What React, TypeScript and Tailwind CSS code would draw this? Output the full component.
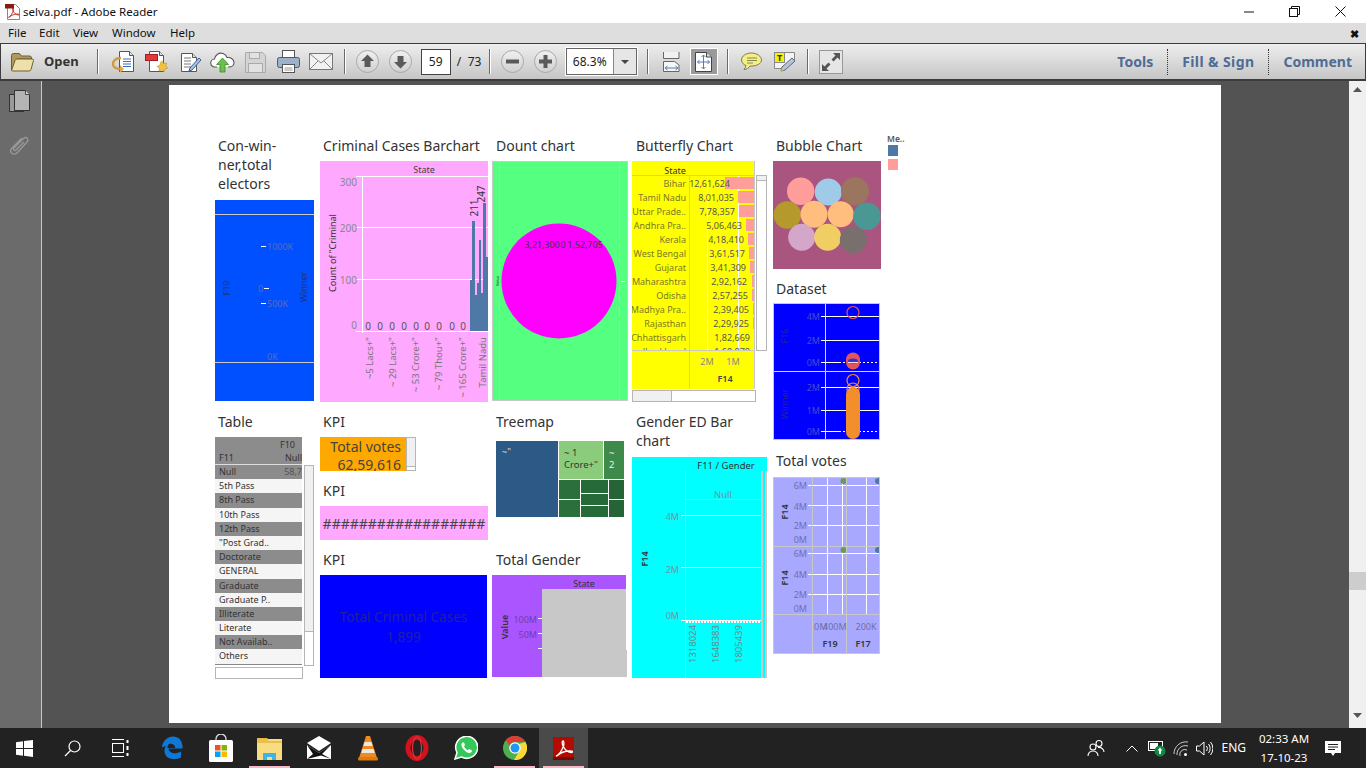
import React from "react";

type TP = { x: number; y: number; c?: string; s?: number; a?: "start" | "middle" | "end"; r?: boolean; w?: number; children: React.ReactNode };
const T = ({ x, y, c = "#555", s = 9, a = "middle", r, w, children }: TP) => (
  <text x={x} y={y} fill={c} fontSize={s} fontWeight={w} textAnchor={a} dominantBaseline="central" transform={r ? `rotate(-90 ${x} ${y})` : undefined}>
    {children}
  </text>
);
const L = ({ x1, y1, x2, y2, c = "#fff", w = 1, d }: { x1: number; y1: number; x2: number; y2: number; c?: string; w?: number; d?: string }) => (
  <line x1={x1} y1={y1} x2={x2} y2={y2} stroke={c} strokeWidth={w} strokeDasharray={d} />
);

const Title = ({ children, className = "" }: { children: React.ReactNode; className?: string }) => (
  <div className={"pl-[3px] text-[14px] leading-[19px] text-[#333] " + className}>{children}</div>
);

/* ---------- charts ---------- */
const ElectorsChart = () => (
  <svg width={99} height={201} className="block bg-[#0050ff]">
    <L x1={0} y1={14.5} x2={99} y2={14.5} c="#c8c8c8" />
    <L x1={0} y1={162.5} x2={99} y2={162.5} c="#c8c8c8" />
    <L x1={46} y1={46.5} x2={51} y2={46.5} />
    <L x1={49} y1={88.5} x2={54} y2={88.5} />
    <L x1={46} y1={103.5} x2={51} y2={103.5} />
    <T x={52} y={46} a="start" c="#5a6ab8">1000K</T>
    <T x={43} y={88} a="start" c="#5a6ab8">0</T>
    <T x={52} y={103} a="start" c="#5a6ab8">500K</T>
    <T x={52} y={156} a="start" c="#5a6ab8">0K</T>
    <T x={11} y={88} r c="#1d3580">F19</T>
    <T x={88} y={87} r c="#1d3580">Winner</T>
  </svg>
);

const zeros = [48, 60, 72, 84, 96, 107, 119, 132, 143];
const bars: [number, number, number][] = [[150, 2, 119], [152, 3, 60], [155, 2, 134], [157, 2, 122], [159, 2, 79], [161, 2, 132], [163, 3, 42], [166, 2, 96]];
const ticks: [number, string][] = [[49, '~5 Lacs+"'], [72, '~ 29 Lacs+"'], [95, '~ 53 Crore+"'], [118, '~ 79 Thou+"'], [142, '~ 165 Crore+"'], [162, "Tamil Nadu"]];
const CriminalChart = () => (
  <svg width={168} height={241} className="block bg-[#ffa8ff]">
    <T x={104} y={8} c="#444">State</T>
    <L x1={36} y1={15.5} x2={168} y2={15.5} />
    <L x1={36} y1={66.5} x2={168} y2={66.5} />
    <L x1={36} y1={118.5} x2={168} y2={118.5} />
    <L x1={36} y1={170.5} x2={168} y2={170.5} />
    <L x1={42.5} y1={15} x2={42.5} y2={172} />
    <T x={37} y={21} a="end" c="#888" s={10}>300</T>
    <T x={37} y={67} a="end" c="#888" s={10}>200</T>
    <T x={37} y={119} a="end" c="#888" s={10}>100</T>
    <T x={37} y={164} a="end" c="#888" s={10}>0</T>
    <T x={12} y={92} r c="#333" s={9}>Count of "Criminal</T>
    {zeros.map((x) => (
      <T key={x} x={x} y={165} c="#555" s={10}>0</T>
    ))}
    {bars.map(([x, w, t]) => (
      <rect key={x} x={x} y={t} width={w} height={170 - t} fill="#4e79a7" />
    ))}
    <T x={154} y={47} r c="#333" s={10}>211</T>
    <T x={161} y={33} r c="#333" s={10}>247</T>
    {ticks.map(([x, s]) => (
      <T key={x} x={x} y={176} a="end" r c="#777" s={9.5}>{s}</T>
    ))}
  </svg>
);

const DonutChart = () => (
  <svg width={136} height={240} className="block bg-[#55ff80] border border-[#c8c8c8]">
    <g transform="translate(-1 -1)">
      <L x1={7.5} y1={0} x2={7.5} y2={240} c="#c8c8c8" />
      <L x1={127.5} y1={0} x2={127.5} y2={240} c="#c8c8c8" />
      <circle cx={67} cy={120} r={57.5} fill="#ff00ff" />
      <T x={50} y={84} s={8.8} c="#333">3,21,300</T>
      <T x={71} y={84} s={8.8} c="#333">0</T>
      <T x={93} y={84} s={8.8} c="#333">1,52,705</T>
      <T x={5} y={120} r s={4} c="#222">Value</T>
      <L x1={129} y1={120.5} x2={133} y2={120.5} />
    </g>
  </svg>
);

const rows: [string, string, number, number][] = [
  ["Bihar", "12,61,624", 98, 93], ["Tamil Nadu", "8,01,035", 102, 106], ["Uttar Prade..", "7,78,357", 103, 107],
  ["Andhra Pra..", "5,06,463", 110, 114], ["Kerala", "4,18,410", 112, 116], ["West Bengal", "3,61,517", 113, 117],
  ["Gujarat", "3,41,309", 114, 118], ["Maharashtra", "2,92,162", 115, 120], ["Odisha", "2,57,255", 116, 120],
  ["Madhya Pra..", "2,39,405", 117, 121], ["Rajasthan", "2,29,925", 117, 121], ["Chhattisgarh", "1,82,669", 118, 122],
  ["Jharkhand", "1,68,878", 118, 122],
];
const ButterflyChart = () => (
  <svg width={123} height={228} className="block bg-[#ffff00]">
    <T x={43} y={9} c="#333" s={9}>State</T>
    <L x1={0} y1={14.5} x2={123} y2={14.5} c="#c8c8c8" />
    <L x1={57.5} y1={14} x2={57.5} y2={228} c="#c8c8c8" />
    <svg y={15} width={123} height={174}>
      <L x1={75.5} y1={0} x2={75.5} y2={174} />
      <L x1={106.5} y1={0} x2={106.5} y2={174} />
      {rows.map(([n, v, e, b], i) => (
        <g key={n}>
          <rect x={b} y={i * 14 + 1} width={122 - b} height={12} fill="#ff9d9a" />
          <T x={54} y={i * 14 + 7} a="end" c="#7a7a2a" s={9}>{n}</T>
          <T x={e} y={i * 14 + 7} a="end" c="#555" s={9}>{v}</T>
        </g>
      ))}
    </svg>
    <L x1={0} y1={189.5} x2={123} y2={189.5} c="#c8c8c8" />
    <L x1={122.5} y1={0} x2={122.5} y2={228} c="#c8c8c8" />
    <T x={75} y={200} c="#888" s={9}>2M</T>
    <T x={101} y={200} c="#888" s={9}>1M</T>
    <T x={93} y={217} c="#444" s={9} w={600}>F14</T>
  </svg>
);

const circles: [number, number, number, string][] = [
  [27.7, 30.3, 13.7, "#ff9d9a"], [55.3, 31, 13.5, "#a0cbe8"], [82, 30.3, 14, "#9c755f"], [14.3, 54, 13.7, "#b6992d"],
  [41, 53.3, 13.5, "#ffbe7d"], [67.7, 53.3, 13, "#ffbe7d"], [94, 55.3, 13.7, "#499894"], [28.7, 76.3, 13.5, "#d4a6c8"],
  [54.7, 76.3, 13.5, "#f1ce63"], [80.3, 79, 13.5, "#79706e"],
];
const BubbleChart = () => (
  <svg width={108} height={108} className="block bg-[#aa5580]">
    {circles.map(([x, y, r, c]) => (
      <circle key={x} cx={x} cy={y} r={r} fill={c} />
    ))}
  </svg>
);

const DatasetChart = () => (
  <svg width={107} height={137} className="block bg-[#0000ff] border border-[#c8c8c8]">
    <g transform="translate(-1 -1)">
      <L x1={52.5} y1={0} x2={52.5} y2={138} c="#d8d8d8" />
      <L x1={0} y1={68.5} x2={108} y2={68.5} c="#d8d8d8" />
      {[13.5, 37.5, 84.5, 107.5].map((y) => (
        <L key={y} x1={48} y1={y} x2={108} y2={y} />
      ))}
      {[59.5, 128.5].map((y) => (
        <g key={y}>
          <L x1={48} y1={y} x2={66} y2={y} />
          <L x1={66} y1={y} x2={108} y2={y} d="2 2" />
        </g>
      ))}
      {([[13, "4M"], [37, "2M"], [59, "0M"], [84, "2M"], [107, "1M"], [128, "0M"]] as [number, string][]).map(([y, s]) => (
        <T key={y} x={47} y={y} a="end" c="#4a4ad0" s={9}>{s}</T>
      ))}
      <T x={11} y={33} r c="#22229a" s={9}>F16</T>
      <T x={11} y={101} r c="#22229a" s={9}>Winner</T>
      <circle cx={80} cy={9.5} r={6} fill="none" stroke="#e15759" strokeWidth={1.2} />
      <rect x={73} y={49.5} width={14} height={17} rx={7} fill="#e15759" />
      <ellipse cx={80} cy={58} rx={5} ry={2.5} fill="#3030e0" />
      <L x1={75} y1={59.5} x2={85} y2={59.5} c="#ffd8d8" />
      <circle cx={80} cy={77.5} r={6} fill="none" stroke="#f28e2b" strokeWidth={1.2} />
      <circle cx={80} cy={86} r={6} fill="none" stroke="#f28e2b" strokeWidth={1.2} />
      <rect x={73} y={84} width={14} height={52} rx={7} fill="#f28e2b" />
    </g>
  </svg>
);

const VotesChart = () => (
  <svg width={107} height={177} className="block bg-[#a8a8ff] border border-[#c8c8c8]">
    <g transform="translate(-1 -1)">
      {[54, 69, 93].map((x) => (
        <L key={x} x1={x + 0.5} y1={0} x2={x + 0.5} y2={137} />
      ))}
      {[8.5, 28.5, 48.5, 76.5, 97.5, 117.5].map((y) => (
        <L key={y} x1={35} y1={y} x2={108} y2={y} />
      ))}
      <L x1={39.5} y1={0} x2={39.5} y2={178} c="#c8c8c8" />
      <L x1={73.5} y1={0} x2={73.5} y2={178} c="#c8c8c8" />
      <L x1={0} y1={69.5} x2={108} y2={69.5} c="#c8c8c8" />
      <L x1={0} y1={137.5} x2={108} y2={137.5} c="#c8c8c8" />
      {([[8, "6M"], [29, "4M"], [48, "2M"], [62, "0M"], [76, "6M"], [97, "4M"], [117, "2M"], [131, "0M"]] as [number, string][]).map(([y, s]) => (
        <T key={y} x={34} y={y} a="end" c="#7070a8" s={9}>{s}</T>
      ))}
      <T x={11} y={35} r c="#333" s={9} w={600}>F14</T>
      <T x={11} y={101} r c="#333" s={9} w={600}>F14</T>
      <circle cx={70.5} cy={4} r={3} fill="#6a9a5a" />
      <circle cx={105} cy={4} r={3} fill="#4e79a7" />
      <circle cx={70.5} cy={73} r={3} fill="#6a9a5a" />
      <circle cx={105} cy={73} r={3} fill="#4e79a7" />
      <L x1={73.5} y1={0} x2={73.5} y2={137} c="#c8c8c8" />
      <T x={41} y={149} a="start" c="#7070a8" s={9}>0M</T>
      <T x={50} y={149} a="start" c="#7070a8" s={9}>400M</T>
      <T x={93} y={149} c="#7070a8" s={9}>200K</T>
      <T x={57} y={166} c="#333" s={9} w={600}>F19</T>
      <T x={90} y={166} c="#333" s={9} w={600}>F17</T>
    </g>
  </svg>
);

const TableWidget = () => {
  const names = ["Null", "5th Pass", "8th Pass", "10th Pass", "12th Pass", '"Post Grad..', "Doctorate", "GENERAL", "Graduate", "Graduate P..", "Illiterate", "Literate", "Not Availab..", "Others"];
  return (
    <div className="w-[100px]">
      <div className="flex">
        <div className="w-[87px] shrink-0 overflow-hidden text-[9px] text-[#333]">
          <div className="h-[28px] bg-[#8c8c8c] border-b border-[#ddd]">
            <div className="text-right pt-[2px] pr-[7px] leading-[12px]">F10</div>
            <div className="flex justify-between pl-[4px] leading-[14px]">
              <span>F11</span>
              <span>Null</span>
            </div>
          </div>
          {names.map((n, i) => (
            <div key={n} className={"h-[14.2px] leading-[14px] pl-[4px] flex justify-between whitespace-nowrap " + (i % 2 === 0 ? "bg-[#8c8c8c]" : "bg-[#f5f5f5]")}>
              <span>{n}</span>
              {i === 0 && <span className="text-[#555]">58,7</span>}
            </div>
          ))}
          <div className="h-[1px] bg-[#888]" />
        </div>
        <div className="ml-[2px] mt-[28px] w-[10px] h-[201px] border border-[#b5b5b5] bg-white">
          <div className="h-[166px] bg-[#f0f0f0] border-b border-[#b5b5b5]" />
        </div>
      </div>
      <div className="mt-[1px] w-[88px] h-[12px] border border-[#b5b5b5] bg-white" />
    </div>
  );
};

const TreeMap = () => (
  <svg width={128} height={76} className="block">
    <rect x={0} y={0} width={62} height={76} fill="#2c5985" />
    <rect x={63} y={0} width={44} height={38} fill="#8bcc7c" />
    <rect x={108} y={0} width={20} height={38} fill="#3e8a4b" />
    <rect x={63} y={39} width={21} height={19} fill="#2a6f3c" />
    <rect x={63} y={59} width={21} height={17} fill="#2a6f3c" />
    <rect x={85} y={39} width={27} height={13} fill="#256a38" />
    <rect x={85} y={53} width={27} height={11} fill="#256a38" />
    <rect x={85} y={65} width={27} height={11} fill="#256a38" />
    <rect x={113} y={39} width={15} height={19} fill="#266337" />
    <rect x={113} y={59} width={15} height={17} fill="#266337" />
    <T x={6} y={10} a="start" c="#ddd" s={9}>~"</T>
    <T x={68} y={11} a="start" c="#333" s={9.5}>~ 1</T>
    <T x={68} y={23} a="start" c="#333" s={9.5}>Crore+"</T>
    <T x={113} y={11} a="start" c="#eee" s={9.5}>~</T>
    <T x={113} y={23} a="start" c="#eee" s={9.5}>2</T>
  </svg>
);

const GenderTotal = () => (
  <svg width={135} height={102} className="block">
    <rect width={134} height={102} fill="#aa55ff" />
    <T x={92} y={8} c="#333" s={9}>State</T>
    <rect x={50} y={14} width={84} height={88} fill="#c8c8c8" />
    <rect x={50} y={75} width={85} height={27} fill="#c8c8c8" />
    {[43, 58, 73].map((y) => (
      <L key={y} x1={46} y1={y + 0.5} x2={50} y2={y + 0.5} />
    ))}
    <T x={45} y={44} a="end" c="#7040a8" s={9}>100M</T>
    <T x={45} y={59} a="end" c="#7040a8" s={9}>50M</T>
    <T x={12} y={52} r c="#333" s={9} w={600}>Value</T>
  </svg>
);

const GenderBar = () => (
  <svg width={135} height={221} className="block bg-[#00ffff]">
    <T x={94} y={8} c="#333" s={9.5}>F11 / Gender</T>
    <L x1={53.5} y1={14} x2={53.5} y2={221} c="#c8c8c8" />
    <rect x={129} y={14} width={2} height={207} fill="#c8c8c8" />
    <rect x={133} y={14} width={2} height={207} fill="#c8c8c8" />
    <L x1={53} y1={42.5} x2={129} y2={42.5} c="#c8c8c8" />
    <T x={91} y={37} c="#6a9a9a" s={9.5}>Null</T>
    <L x1={49} y1={58.5} x2={129} y2={58.5} />
    <L x1={49} y1={110.5} x2={129} y2={110.5} />
    <L x1={49} y1={163.5} x2={129} y2={163.5} />
    <L x1={54} y1={165} x2={129} y2={165} d="2 1" w={2} />
    <T x={47} y={59} a="end" c="#6a9a9a" s={9}>4M</T>
    <T x={47} y={112} a="end" c="#6a9a9a" s={9}>2M</T>
    <T x={47} y={158} a="end" c="#6a9a9a" s={9}>0M</T>
    <T x={12} y={102} r c="#333" s={9} w={600}>F14</T>
    {([[60, "1318024"], [83, "1648383"], [106, "1805439"]] as [number, string][]).map(([x, s]) => (
      <T key={x} x={x} y={168} a="end" r c="#6a8a8a" s={9.5}>{s}</T>
    ))}
  </svg>
);

/* ---------- page ---------- */
const Page = () => (
  <div className="w-[1052px] h-[638px] bg-white flex pl-[46px] pt-[51px]">
    <div className="w-[105px] shrink-0">
      <Title className="mb-[7px]">Con-win-<br />ner,total<br />electors</Title>
      <ElectorsChart />
      <Title className="mt-[11px] mb-[6px]">Table</Title>
      <TableWidget />
    </div>
    <div className="w-[172px] shrink-0">
      <Title className="mb-[6px]">Criminal Cases Barchart</Title>
      <CriminalChart />
      <Title className="mt-[10px] mb-[6px]">KPI</Title>
      <div className="flex h-[34px]">
        <div className="w-[86px] bg-[#ffa800] overflow-hidden text-right pr-[5px] pt-[1px] text-[14px] leading-[18px] text-[#444]">
          <div>Total votes</div>
          <div>62,59,616</div>
        </div>
        <div className="w-[10px] border border-[#b5b5b5] bg-white">
          <div className="h-[29px] bg-[#f0f0f0] border-b border-[#b5b5b5]" />
        </div>
      </div>
      <Title className="mt-[10px] mb-[6px]">KPI</Title>
      <div className="w-[168px] h-[34px] bg-[#ffa8ff] flex items-center justify-center text-[14px] text-[#444]">##################</div>
      <Title className="mt-[10px] mb-[6px]">KPI</Title>
      <div className="w-[167px] h-[103px] bg-[#0000ff] flex flex-col items-center justify-center text-[13.5px] leading-[20px] text-[#2020a0]">
        <div>Total Criminal Cases</div>
        <div>1,899</div>
      </div>
    </div>
    <div className="w-[140px] shrink-0">
      <Title className="mb-[6px] pl-[4px]">Dount chart</Title>
      <DonutChart />
      <Title className="mt-[11px] mb-[10px] pl-[4px]">Treemap</Title>
      <div className="pl-[4px]"><TreeMap /></div>
      <Title className="mt-[33px] mb-[6px] pl-[4px]">Total Gender</Title>
      <GenderTotal />
    </div>
    <div className="w-[141px] shrink-0">
      <Title className="mb-[6px] pl-[4px]">Butterfly Chart</Title>
      <div className="flex">
        <ButterflyChart />
        <div className="ml-[1px] mt-[14px] w-[11px] h-[176px] border border-[#b5b5b5] bg-white">
          <div className="h-[5px] bg-[#f0f0f0] border-b border-[#b5b5b5]" />
        </div>
      </div>
      <div className="mt-[1px] w-[124px] h-[12px] border border-[#b5b5b5] bg-white">
        <div className="h-full w-[39px] bg-[#f0f0f0] border-r border-[#b5b5b5]" />
      </div>
      <Title className="mt-[10px] mb-[7px] pl-[4px]">Gender ED Bar<br />chart</Title>
      <GenderBar />
    </div>
    <div className="w-[114px] shrink-0">
      <Title className="mb-[6px]">Bubble Chart</Title>
      <BubbleChart />
      <Title className="mt-[10px] mb-[5px]">Dataset</Title>
      <DatasetChart />
      <Title className="mt-[11px] mb-[7px]">Total votes</Title>
      <VotesChart />
    </div>
    <div className="-mt-[2px]">
      <div className="text-[8.5px] leading-[10px] text-[#555] font-semibold">Me..</div>
      <div className="ml-[1px] mt-[1px] w-[10px] h-[11px] bg-[#4e79a7]" />
      <div className="ml-[1px] mt-[3px] w-[10px] h-[11px] bg-[#ff9d9a]" />
    </div>
  </div>
);

/* ---------- toolbar icons ---------- */
const Folder = () => (
  <svg width={25} height={20} viewBox="0 0 25 20">
    <path d="M1.5 18.5V3.5q0-2 2-2h6l2 2.5h8q2 0 2 2v1h-14l-3 11.5z" fill="#b09a5a" stroke="#6e5f36" />
    <path d="M1.5 18.5l3.5-10q.4-1.5 2-1.5h15q1.8 0 1.5 1.5l-2.5 9q-.4 1.5-2 1.5H2.5z" fill="#efdfa8" stroke="#6e5f36" />
  </svg>
);
const PageBase = ({ children }: { children?: React.ReactNode }) => (
  <>
    <path d="M4.5 1.5h10l4 4v16h-14z" fill="#fff" stroke="#555" />
    <path d="M14.5 1.5v4h4" fill="#ddd" stroke="#555" />
    {children}
  </>
);
const ConvertIcon = () => (
  <svg width={23} height={24} viewBox="0 0 23 24">
    <g transform="translate(3 0)"><PageBase /></g>
    {[9, 11.5, 14, 16.5].map((y) => <L key={y} x1={11} y1={y} x2={19} y2={y} c="#3a6cc0" />)}
    <path d="M9 8C2 8 0 13 1.5 16c1 2 4 3 8 3" fill="none" stroke="#d49a3a" strokeWidth={2.4} />
    <path d="M8 15l4 4-4 4z" fill="#e0a84a" />
  </svg>
);
const PdfStarIcon = () => (
  <svg width={24} height={24} viewBox="0 0 24 24">
    <PageBase />
    <rect x={0.5} y={4.5} width={12} height={6} fill="#e03a3a" stroke="#a02020" />
    <path d="M17 11l1.7 2.6 3-.6-.8 3 2 2.2-3 .6-.6 3-2.4-1.9-2.8 1.2.2-3-2.4-1.8 2.9-.9.7-3z" fill="#f3c13c" stroke="#b48a20" strokeWidth={0.5} />
  </svg>
);
const EditIcon = () => (
  <svg width={22} height={24} viewBox="0 0 22 24">
    <path d="M1.5 3.5h11l4 4v14h-15z" fill="#fff" stroke="#555" />
    <path d="M12.5 3.5v4h4" fill="#ddd" stroke="#555" />
    {[8, 11, 14, 17].map((y) => <L key={y} x1={4} y1={y} x2={11} y2={y} c="#777" />)}
    <path d="M10 18l-1 3 3-1 9-10-2-2z" fill="#a8c4e8" stroke="#3a5a90" />
  </svg>
);
const CloudIcon = () => (
  <svg width={25} height={24} viewBox="0 0 25 24">
    <path d="M7 17H5a4 4 0 0 1-.5-8C5 5 9 2 13 3.5c2 .7 3.5 2 4 4 4-.5 7 2 7 5 0 3-2.5 4.5-5 4.5h-1" fill="#fff" stroke="#555" strokeWidth={1.1} />
    <path d="M12.5 8l6 6.5h-3.5V22h-5v-7.5H6.5z" fill="#6cc04a" stroke="#3a8a2a" strokeWidth={0.8} />
  </svg>
);
const SaveIcon = () => (
  <svg width={21} height={22} viewBox="0 0 21 22">
    <path d="M.5 1.5h17l3 3v17H.5z" fill="#d4d4d4" stroke="#aaa" />
    <rect x={4.5} y={1.5} width={10} height={6} fill="#e2e2e2" stroke="#aaa" />
    <rect x={3.5} y={12.5} width={14} height={9} fill="#e2e2e2" stroke="#aaa" />
  </svg>
);
const PrintIcon = () => (
  <svg width={23} height={24} viewBox="0 0 23 24">
    <rect x={5.5} y={.5} width={12} height={7} fill="#fff" stroke="#555" />
    <rect x={.5} y={7.5} width={22} height={10} rx={2} fill="#9db2c8" stroke="#4a5a70" />
    <rect x={5.5} y={14.5} width={12} height={8} fill="#fff" stroke="#555" />
    <L x1={7.5} y1={18} x2={15.5} y2={18} c="#999" />
    <L x1={7.5} y1={20} x2={15.5} y2={20} c="#999" />
  </svg>
);
const MailIcon = () => (
  <svg width={24} height={17} viewBox="0 0 24 17">
    <rect x={.5} y={.5} width={23} height={16} fill="#f2f2f2" stroke="#777" />
    <path d="M.5 .5L12 10 23.5 .5M.5 16.5L9 8M23.5 16.5L15 8" fill="none" stroke="#888" />
  </svg>
);
const RoundBtn = ({ d }: { d: string }) => (
  <svg width={23} height={23} viewBox="0 0 23 23">
    <defs>
      <linearGradient id="rb" x1="0" y1="0" x2="0" y2="1">
        <stop offset="0" stopColor="#f0f0f0" />
        <stop offset="1" stopColor="#d0d0d0" />
      </linearGradient>
    </defs>
    <circle cx={11.5} cy={11.5} r={11} fill="url(#rb)" stroke="#a8a8a8" />
    <path d={d} fill="#5a5a5a" />
  </svg>
);
const FitWidth = () => (
  <svg width={17} height={20} viewBox="0 0 17 20">
    <path d="M.5 0v6.5h15.5V0" fill="#f2f2f2" stroke="#666" />
    <path d="M.5 9.5h11l4.5 3.5v6.5H.5z" fill="#f6f6f6" stroke="#666" />
    <path d="M2 16h13M2 16l2.5-2M2 16l2.5 2M15 16l-2.5-2M15 16l-2.5 2" stroke="#5a7ab8" fill="none" />
  </svg>
);
const FitPage = () => (
  <svg width={17} height={20} viewBox="0 0 17 20">
    <path d="M.5 .5h11l5 4.5v14.500H.5z" fill="#fff" stroke="#444" />
    <path d="M11.5 .5v4.500h5" fill="#ddd" stroke="#444" />
    <path d="M8.5 3v14M2.5 10h12M6.5 5l2-2 2 2M6.5 15l2 2 2-2M4.5 8l-2 2 2 2M12.5 8l2 2-2 2" stroke="#5a7ab8" fill="none" />
  </svg>
);
const Bubble = () => (
  <svg width={21} height={21} viewBox="0 0 21 21">
    <path d="M10.5 2C5 2 .5 5 .5 9c0 2.5 2 4.5 4.5 5.5-.3 1.5-1 3-2 4 2.5 0 5-1.5 6-3.500h1.500c5.500 0 10-2.500 10-6s-4.500-7-10-7z" fill="#f4ee88" stroke="#7a7a4a" />
    <path d="M6 7h10M6 9.5h10M6 12h6" stroke="#8a8a4a" fill="none" />
  </svg>
);
const TextPen = () => (
  <svg width={22} height={22} viewBox="0 0 22 22">
    <path d="M.5 1.5h20v9l-9 7H.5z" fill="#f4f4f4" stroke="#888" />
    <rect x={.5} y={1.5} width={10} height={10} fill="#f8f000" stroke="#888" />
    <text x={5.5} y={6.8} fontSize={9} fill="#333" textAnchor="middle" dominantBaseline="central" fontWeight={700}>T</text>
    <path d="M7 20l1-4 10-9 3 3-10 9z" fill="#b8c4d4" stroke="#5a6a7a" />
    <path d="M7 20l1-3 2 2z" fill="#e8d048" />
  </svg>
);
const Expand = () => (
  <svg width={24} height={24} viewBox="0 0 24 24">
    <rect x={.5} y={.5} width={23} height={23} fill="#e6e6e6" stroke="#999" />
    <path d="M14 3h7v7l-2.500-2.500-4 4-2-2 4-4zM10 21H3v-7l2.500 2.500 4-4 2 2-4 4z" fill="#555" />
  </svg>
);
const Sep = ({ l }: { l: string }) => <div className={"w-[2px] h-[25px] bg-[#6a6a6a] border-r border-white shrink-0 " + l} />;
const VSep = () => <div className="h-[26px] w-0 border-l border-dotted border-[#333]" />;

/* ---------- taskbar icons ---------- */
const WinLogo = () => (
  <svg width={17} height={17} viewBox="0 0 17 17" fill="#fff">
    <path d="M0 2.3l7-1V8H0zM8 1.100L17 0v8H8zM0 9h7v6.700l-7-1zM8 9h9v8l-9-1.200z" />
  </svg>
);
const SearchI = () => (
  <svg width={17} height={17} viewBox="0 0 17 17" fill="none" stroke="#fff" strokeWidth={1.2}>
    <circle cx={10.5} cy={6.5} r={5.5} />
    <path d="M6.5 10.5L1 16" />
  </svg>
);
const TaskView = () => (
  <svg width={18} height={18} viewBox="0 0 18 18" fill="none" stroke="#fff">
    <path d="M1 .5h12M1 17.5h12" />
    <rect x={1.5} y={4.5} width={11} height={9} />
    <path d="M16.5 1v3M16.5 7v4M16.5 14v3" strokeWidth={2} />
  </svg>
);
const EdgeI = () => (
  <svg width={22} height={24} viewBox="0 0 22 24">
    <path d="M1 11C2 4 7 .5 12 .5c6 0 10 4.500 9.500 12H7.500c.3 4.500 6.500 6.500 12.500 3v6c-7 3.500-17 1.500-16.500-7.500.2-3 2-5.500 5-7-1.500 2-2 3.500-2.200 5h8c.2-4-5-6-9-2.500-1.500 1-3 2-4.800 1.500z" fill="#0f78d4" />
  </svg>
);
const StoreI = () => (
  <svg width={24} height={28} viewBox="0 0 24 28">
    <path d="M7 8V5a5 5 0 0 1 10 0v3" fill="none" stroke="#ddd" strokeWidth={1.3} />
    <rect x={0} y={6} width={24} height={22} rx={1.5} fill="#fff" />
    <rect x={6} y={11} width={5.5} height={5.5} fill="#f25022" />
    <rect x={12.5} y={11} width={5.5} height={5.5} fill="#7fba00" />
    <rect x={6} y={17.5} width={5.5} height={5.5} fill="#00a4ef" />
    <rect x={12.5} y={17.5} width={5.5} height={5.5} fill="#ffb900" />
  </svg>
);
const ExplorerI = () => (
  <svg width={26} height={24} viewBox="0 0 26 24">
    <path d="M0 2h10l2 2h12v4H0z" fill="#e8b93c" />
    <rect x={0} y={3} width={25} height={21} fill="#f9dc82" />
    <path d="M0 3h10l2 2h13v2H0z" fill="#e8c04c" />
    <path d="M6 24v-7h13v7h-4v-3h-5v3z" fill="#3cb4e8" />
  </svg>
);
const MailT = () => (
  <svg width={24} height={24} viewBox="0 0 24 24">
    <path d="M0 7L12 0l12 7-12 8z" fill="#fff" />
    <path d="M0 9l12 8 12-8v14H0z" fill="#fff" />
    <path d="M0 9l12 8 12-8-9 9 9 5-10-3.500L0 23l6-5z" fill="#111" />
  </svg>
);
const VlcI = () => (
  <svg width={20} height={26} viewBox="0 0 20 26">
    <path d="M8 1h4l7 22H1z" fill="#f08a1c" />
    <path d="M6.6 7h6.800l1.200 4H5.400zM4.600 14h10.800l1.300 4H3.300z" fill="#e8e8e8" />
    <rect x={0} y={22} width={20} height={3.5} rx={1.5} fill="#e07a10" />
  </svg>
);
const OperaI = () => (
  <svg width={24} height={26} viewBox="0 0 24 26">
    <ellipse cx={12} cy={13} rx={9} ry={10.5} fill="none" stroke="#d4121e" strokeWidth={5} />
    <ellipse cx={12} cy={13} rx={4.5} ry={11} fill="none" stroke="#e8303a" strokeWidth={1.2} />
  </svg>
);
const WhatsI = () => (
  <svg width={24} height={24} viewBox="0 0 24 24">
    <path d="M1 23l2-6.500A11 11 0 1 1 7.500 21z" fill="#34c759" stroke="#fff" strokeWidth={1.5} />
    <path d="M8.5 6.5c-1.500 1-1.500 3 0 5.500 2 3 5 5 7 5 1.500 0 2.500-1 2.500-2.500l-3-1.500-1 1.200c-1.500-.5-3-2-4-4l1-1.200-1-2.500z" fill="#fff" />
  </svg>
);
const ChromeI = () => (
  <svg width={24} height={24} viewBox="0 0 24 24">
    <circle cx={12} cy={12} r={12} fill="#4caf50" />
    <path d="M12 0a12 12 0 0 1 10.400 6H12a6 6 0 0 0-5.600 3.800L3 4A12 12 0 0 1 12 0z" fill="#e53935" />
    <path d="M22.4 6A12 12 0 0 1 11 24l5-8.500A6 6 0 0 0 16 8z" fill="#fdd835" />
    <circle cx={12} cy={12} r={5.8} fill="#fff" />
    <circle cx={12} cy={12} r={4.5} fill="#2196f3" />
  </svg>
);
const AdobeSwoosh = ({ c = "#fff" }: { c?: string }) => (
  <path d="M3 19c3-1 6-6 7.500-10 .6-2 .6-5-.5-5s-1 3 0 5c1.500 3 4.500 6 8 6.500 1.500 .2 2-.8 1-1.300-2.500-1-9 .3-12 2.500-1.500 1-2.500 2-3.500 2.300z" fill="none" stroke={c} strokeWidth={1.3} />
);
const AdobeI = () => (
  <svg width={21} height={23} viewBox="0 0 21 23">
    <rect width={21} height={23} fill="#b30b00" />
    <rect y={20} width={21} height={3} fill="#7a0800" />
    <AdobeSwoosh />
  </svg>
);
const TitlePdf = () => (
  <svg width={15} height={16} viewBox="0 0 15 16">
    <path d="M2.5 .5h8l4 4v11h-12z" fill="#fff" stroke="#888" />
    <rect x={0} y={0} width={9} height={4.5} fill="#8a1a12" />
    <g transform="translate(1.5 1) scale(.65)"><AdobeSwoosh c="#c01a10" /></g>
  </svg>
);
const People = () => (
  <svg width={18} height={18} viewBox="0 0 18 18" fill="none" stroke="#fff" strokeWidth={1.1}>
    <circle cx={12} cy={4.5} r={3} /><circle cx={6} cy={8} r={3} />
    <path d="M1 17c0-3 2-5 5-5s5 2 5 5M11 8.500c3-.5 6 1.500 6 4.500" />
  </svg>
);
const Battery = () => (
  <svg width={18} height={17} viewBox="0 0 18 17">
    <rect x={.5} y={1.5} width={14} height={9} fill="none" stroke="#fff" />
    <rect x={2} y={3} width={8} height={6} fill="#fff" />
    <circle cx={12} cy={11} r={5.5} fill="#10893e" />
    <path d="M12 7.500l2.500 3h-1.500v3.500h-2v-3.500H9.500z" fill="#fff" />
  </svg>
);
const Wifi = () => (
  <svg width={18} height={17} viewBox="0 0 18 17" fill="none" stroke="#ccc">
    <path d="M1 14A12 12 0 0 1 15 2M4 15a8.500 8.500 0 0 1 11-9M7 16a5 5 0 0 1 7-6" />
    <circle cx={12.5} cy={14.5} r={1.5} fill="#fff" stroke="none" />
  </svg>
);
const Vol = () => (
  <svg width={17} height={17} viewBox="0 0 17 17" fill="none" stroke="#fff">
    <path d="M.5 6v5H3.500l4.500 4V2L3.500 6z" />
    <path d="M10.500 6a4 4 0 0 1 0 5M12.500 4a7 7 0 0 1 0 9M14.500 2a10 10 0 0 1 0 13" />
  </svg>
);
const Notif = () => (
  <svg width={16} height={15} viewBox="0 0 16 15">
    <path d="M0 0h16v12h-6l-2 3-2-3H0z" fill="#fff" />
    <path d="M3 3.500h10M3 6h10M3 8.500h7" stroke="#222" />
  </svg>
);

const startIcons = [<WinLogo key="w" />, <SearchI key="s" />, <TaskView key="t" />];
const appIcons: { el: React.ReactNode; under?: boolean; active?: boolean }[] = [
  { el: <EdgeI /> }, { el: <StoreI /> }, { el: <ExplorerI />, under: true }, { el: <MailT /> }, { el: <VlcI /> }, { el: <OperaI /> }, { el: <WhatsI /> },
  { el: <ChromeI />, under: true }, { el: <AdobeI />, under: true, active: true },
];

export default function App() {
  return (
    <div className="w-[1366px] h-[768px] overflow-hidden flex flex-col font-['Noto_Sans','Open_Sans',sans-serif] bg-white">
      {/* title bar */}
      <div className="h-[23px] shrink-0 bg-white flex items-center text-[11.5px] text-[#111]">
        <div className="ml-[5px] mr-[3px] flex"><TitlePdf /></div>
        <span>selva.pdf - Adobe Reader</span>
        <div className="ml-auto flex items-center pr-[20px]">
          <svg width={11} height={2} className="mr-[34px]"><L x1={0} y1={1} x2={10} y2={1} c="#111" /></svg>
          <svg width={11} height={11} viewBox="0 0 11 11" className="mr-[35px]" fill="none" stroke="#111"><path d="M2.5 2.5V.5h8v8h-2" /><rect x={.5} y={2.5} width={8} height={8} fill="#fff" /></svg>
          <svg width={11} height={11} viewBox="0 0 11 11" stroke="#111"><path d="M.5 .5l10 10M10.5 .5l-10 10" /></svg>
        </div>
      </div>
      {/* menu bar */}
      <div className="h-[20px] shrink-0 bg-[#dedede] flex items-center text-[11.5px] text-[#111] pl-[8px]">
        <span className="w-[31px]">File</span>
        <span className="w-[34px]">Edit</span>
        <span className="w-[39px]">View</span>
        <span className="w-[58px]">Window</span>
        <span>Help</span>
        <span className="ml-auto mr-[7px] text-[11px] leading-none font-bold">✖</span>
      </div>
      {/* toolbar */}
      <div className="h-[37px] shrink-0 border border-[#3c3c3c] bg-gradient-to-b from-[#eeeeee] to-[#c6c6c6] flex items-center">
        <div className="ml-[9px] flex"><Folder /></div>
        <span className="ml-[9px] text-[13px] font-bold text-[#333]">Open</span>
        <Sep l="ml-[18px]" />
        <div className="ml-[13px] flex"><ConvertIcon /></div>
        <div className="ml-[10px] flex"><PdfStarIcon /></div>
        <div className="ml-[11px] flex"><EditIcon /></div>
        <div className="ml-[8px] flex"><CloudIcon /></div>
        <div className="ml-[10px] flex"><SaveIcon /></div>
        <div className="ml-[11px] flex"><PrintIcon /></div>
        <div className="ml-[9px] flex"><MailIcon /></div>
        <Sep l="ml-[11px]" />
        <div className="ml-[10px] flex"><RoundBtn d="M11.5 4.5l6.5 6.5h-3.500v6h-6v-6H5z" /></div>
        <div className="ml-[10px] flex"><RoundBtn d="M11.5 18.5l6.5-6.500h-3.500V6h-6v6H5z" /></div>
        <div className="ml-[9px] w-[30px] h-[26px] bg-white border border-[#444] flex items-center justify-center text-[12px] text-[#222]">59</div>
        <span className="ml-[6px] w-[11px] text-[12px] text-[#222]">/</span>
        <span className="w-[21px] text-[12px] text-[#222]">73</span>
        <Sep l="" />
        <div className="ml-[10px] flex"><RoundBtn d="M5 9.5h13v4H5z" /></div>
        <div className="ml-[10px] flex"><RoundBtn d="M9.5 5h4v4.500H18v4h-4.500V18h-4v-4.500H5v-4h4.500z" /></div>
        <div className="ml-[9px] w-[71px] h-[27px] bg-white border border-[#666] outline outline-1 outline-white flex text-[12px] text-[#222]">
          <div className="w-[47px] flex items-center justify-center border-r border-[#888]">68.3%</div>
          <div className="flex-1 bg-[#e6e6e6] flex items-center justify-center">
            <svg width={8} height={4}><path d="M0 0h8L4 4z" fill="#444" /></svg>
          </div>
        </div>
        <Sep l="ml-[10px]" />
        <div className="ml-[14px] flex"><FitWidth /></div>
        <div className="ml-[10px] w-[28px] h-[27px] bg-[#9a9a9a] border border-white flex items-center justify-center"><FitPage /></div>
        <Sep l="ml-[9px]" />
        <div className="ml-[12px] flex"><Bubble /></div>
        <div className="ml-[12px] flex"><TextPen /></div>
        <Sep l="ml-[11px]" />
        <div className="ml-[10px] flex"><Expand /></div>
        <div className="ml-auto flex items-center text-[14px] font-bold text-[#4e6c94] pr-[13px]">
          <span>Tools</span>
          <div className="mx-[14px]"><VSep /></div>
          <span className="tracking-[0.4px]">Fill &amp; Sign</span>
          <div className="mx-[14px]"><VSep /></div>
          <span>Comment</span>
        </div>
      </div>
      {/* main */}
      <div className="flex-1 min-h-0 flex bg-[#535353] border-t border-[#3c3c3c]">
        <div className="w-[41px] shrink-0 bg-[#6b6b6b] flex flex-col items-center">
          <svg width={22} height={24} viewBox="0 0 22 24" className="mt-[9px] mr-[2px]">
            <rect x={.5} y={4.5} width={14} height={17} fill="#9a9a9a" stroke="#333" />
            <path d="M5.5 .5h11l4 4v16h-15z" fill="#b4b4b4" stroke="#333" />
            <path d="M16.5 .5v4h4" fill="#ddd" stroke="#444" />
          </svg>
          <svg width={22} height={24} viewBox="0 0 22 24" className="mt-[19px] mr-[3px]" fill="none" stroke="#9a9a9a" strokeWidth={1.3}>
            <path d="M14 5L4 15c-3 3-.5 7 3 6 1-.3 2-1 3-2l9-10c2-2 0-6-3-4L6 15c-1.500 1.500 .5 3.500 2 2l8-8" />
          </svg>
        </div>
        <div className="w-[1px] shrink-0 bg-[#c8c8c8]" />
        <div className="flex-1 min-w-0 pl-[127px] pt-[4px]">
          <Page />
        </div>
        <div className="w-[17px] shrink-0 bg-[#f0f0f0] flex flex-col items-center">
          <svg width={9} height={5} className="mt-[6px]"><path d="M0 5l4.500-5L9 5z" fill="#555" /></svg>
          <div className="mt-[480px] w-[17px] h-[18px] bg-[#cdcdcd]" />
          <svg width={9} height={5} className="mt-[123px]"><path d="M0 0l4.500 5L9 0z" fill="#555" /></svg>
        </div>
      </div>
      {/* taskbar */}
      <div className="h-[40px] shrink-0 bg-[#222222] flex items-stretch text-white">
        <div className="flex">
          {startIcons.map((el, i) => (
            <div key={i} className="w-[48px] flex items-center justify-center">{el}</div>
          ))}
          <div className="w-[3px]" />
          {appIcons.map((t, i) => (
            <div key={i} className={"w-[49px] flex items-center justify-center relative " + (t.active ? "bg-[#4a4a4a]" : "")}>
              {t.el}
              {t.under && <div className="absolute bottom-0 left-[4px] right-[4px] h-[2px] bg-[#f8b8c4]" />}
            </div>
          ))}
        </div>
        <div className="ml-auto flex items-center">
          <People />
          <svg width={12} height={7} viewBox="0 0 12 7" className="ml-[21px]" fill="none" stroke="#fff"><path d="M.5 6.500L6 1l5.500 5.500" /></svg>
          <div className="ml-[10px] flex"><Battery /></div>
          <div className="ml-[7px] flex"><Wifi /></div>
          <div className="ml-[5px] flex"><Vol /></div>
          <span className="ml-[8px] text-[12px]">ENG</span>
          <div className="ml-[12px] w-[52px] text-center text-[11.5px] leading-[19px] whitespace-nowrap">
            <div>02:33 AM</div>
            <div>17-10-23</div>
          </div>
          <div className="ml-[15px] mr-[25px] flex"><Notif /></div>
        </div>
      </div>
    </div>
  );
}
